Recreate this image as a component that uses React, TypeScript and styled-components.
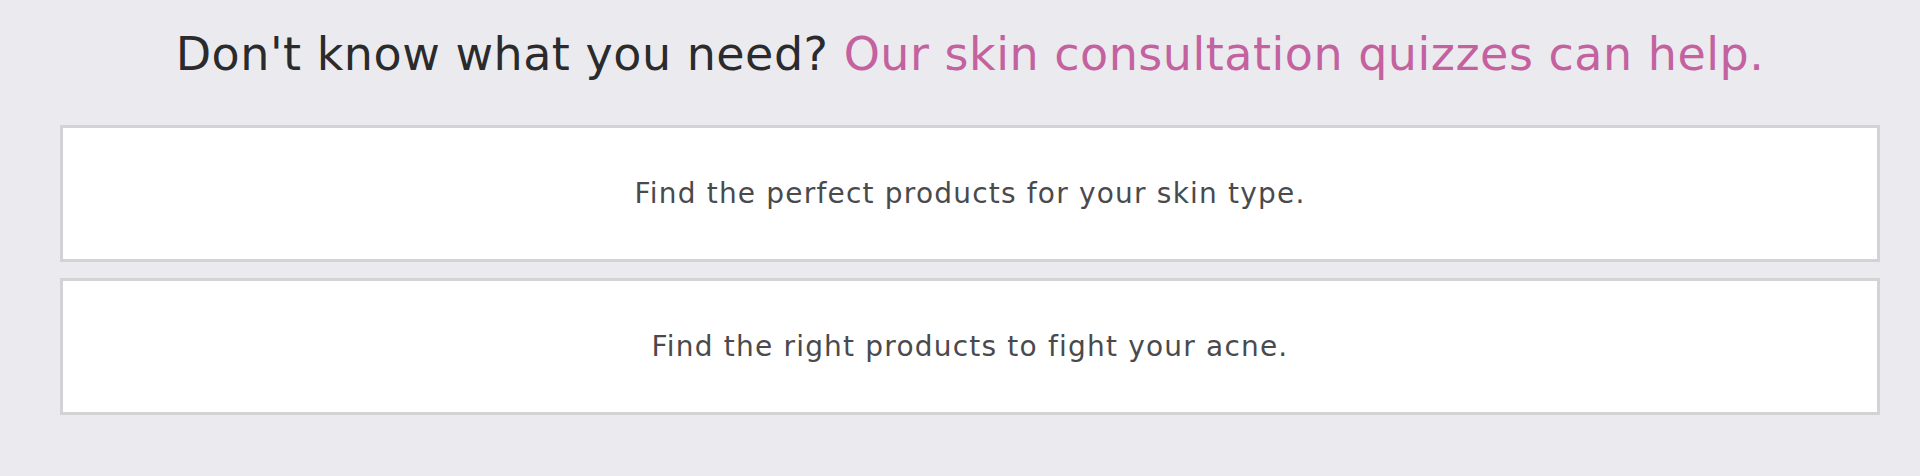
import React from "react";
import styled, { createGlobalStyle } from "styled-components";

const GlobalStyle = createGlobalStyle`
    html, body {
        margin: 0;
        padding: 0;
        background: #ebebef;
    }

    body {
        font-family: "DejaVu Sans", "Open Sans", sans-serif;
    }
`;

const quizzes = [
    { id: 1, text: "Find the perfect products for your skin type." },
    { id: 2, text: "Find the right products to fight your acne." },
];

const App: React.FC = () => {
    return (
        <>
            <GlobalStyle />
            <Section>
                <Heading>
                    Don't know what you need? <Highlight>Our skin consultation quizzes can help.</Highlight>
                </Heading>
                <QuizList>
                    {quizzes.map((quiz) => (
                        <QuizCard key={quiz.id}>
                            <QuizText>{quiz.text}</QuizText>
                        </QuizCard>
                    ))}
                </QuizList>
            </Section>
        </>
    );
};

const Section = styled.section`
    display: flex;
    flex-direction: column;
    align-items: stretch;
    height: 476px;
    box-sizing: border-box;
    padding: 22px 40px 0 60px;
`;

const Heading = styled.h2`
    margin: 0;
    text-align: center;
    font-size: 46px;
    font-weight: 400;
    line-height: 64px;
    letter-spacing: 0.5px;
    color: #2b2b2d;
`;

const Highlight = styled.span`
    color: #c4619f;
`;

const QuizList = styled.div`
    display: flex;
    flex-direction: column;
    gap: 16px;
    margin-top: 39px;
`;

const QuizCard = styled.button`
    display: flex;
    justify-content: center;
    align-items: center;
    height: 137px;
    box-sizing: border-box;
    background: #fff;
    border: 3px solid #d2d3d5;
    cursor: pointer;
    padding: 0;
`;

const QuizText = styled.span`
    font-family: "DejaVu Sans", "Open Sans", sans-serif;
    font-size: 28px;
    letter-spacing: 1.2px;
    color: #4a4a4d;
`;

export default App;
